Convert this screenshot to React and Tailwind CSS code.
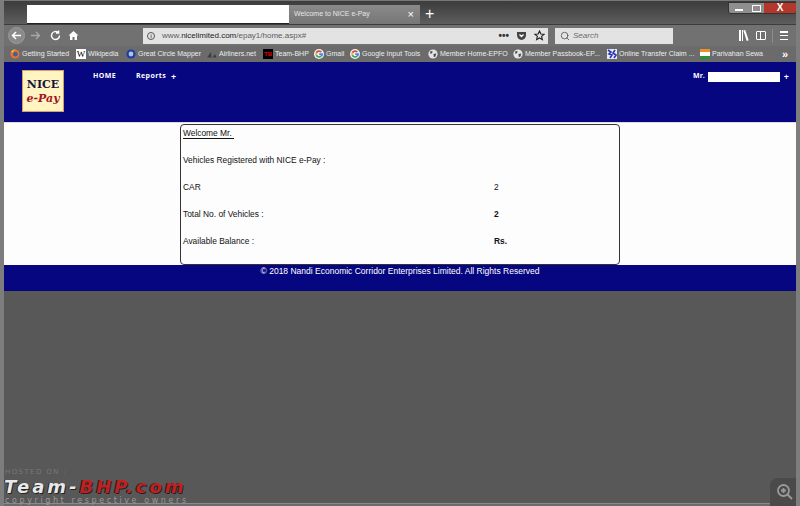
import { Search } from 'lucide-react';

const bookmarks = [
  { label: 'Getting Started', icon: 'firefox', width: 'w-[50px]' },
  { label: 'Wikipedia', icon: 'wiki', width: 'w-[34px]' },
  { label: 'Great Circle Mapper', icon: 'circle', width: 'w-[65px]' },
  { label: 'Airliners.net', icon: 'air', width: 'w-[40px]' },
  { label: 'Team-BHP', icon: 'tb', width: 'w-[35px]' },
  { label: 'Gmail', icon: 'google', width: 'w-[20px]' },
  { label: 'Google Input Tools', icon: 'google', width: 'w-[62px]' },
  { label: 'Member Home-EPFO', icon: 'globe', width: 'w-[69px]' },
  { label: 'Member Passbook-EP...', icon: 'globe', width: 'w-[78px]' },
  { label: 'Online Transfer Claim ...', icon: 'blue', width: 'w-[77px]' },
  { label: 'Parivahan Sewa', icon: 'flag', width: 'w-[60px]' }
];

function BookmarkIcon({ type }) {
  if (type === 'firefox') {
    return (
      <svg width="10" height="10" viewBox="0 0 10 10">
        <circle cx="5" cy="5" r="4.6" fill="#e8742a" />
        <circle cx="5.4" cy="5.2" r="2.4" fill="#3f5fa8" />
        <path d="M1 3 C2 1 4 0 6 .6 C4 1 3 2 3.4 3.4 Z" fill="#f5c23c" />
      </svg>
    );
  }
  if (type === 'wiki') {
    return <div className="flex h-[10px] w-[10px] items-center justify-center bg-white font-['Liberation_Serif',serif] text-[9px] leading-none text-black">W</div>;
  }
  if (type === 'circle') {
    return (
      <svg width="10" height="10" viewBox="0 0 10 10">
        <circle cx="5" cy="5" r="4.6" fill="#1f3f9c" />
        <circle cx="5" cy="5" r="2.4" fill="#a9c4ea" />
      </svg>
    );
  }
  if (type === 'air') {
    return (
      <svg width="10" height="10" viewBox="0 0 10 10">
        <path d="M0 8.5 L4 3 L4.6 8.5 Z M5.5 8.5 L8 5 L9.6 8.5 Z" fill="#3e3e3e" />
      </svg>
    );
  }
  if (type === 'tb') {
    return <div className="flex h-[10px] w-[10px] items-center justify-center bg-black font-['Liberation_Sans',sans-serif] text-[6px] font-bold leading-none text-red-600">TB</div>;
  }
  if (type === 'google') {
    return (
      <svg width="10" height="10" viewBox="0 0 10 10">
        <circle cx="5" cy="5" r="5" fill="#f3f3f3" />
        <path d="M8.2 2.7 A4 4 0 0 0 1.6 3.2 L3.2 4.2 A2.1 2.1 0 0 1 6.6 3.6 Z" fill="#dc4a3d" />
        <path d="M1.6 3.2 A4 4 0 0 0 1.6 6.8 L3.2 5.8 A2.1 2.1 0 0 1 3.2 4.2 Z" fill="#f0b429" />
        <path d="M1.6 6.8 A4 4 0 0 0 7.8 7.8 L6.4 6.6 A2.1 2.1 0 0 1 3.2 5.8 Z" fill="#35a853" />
        <path d="M9 4.2 H5.2 V5.9 H7.1 A2 2 0 0 1 6.4 6.6 L7.8 7.8 A4 4 0 0 0 9 4.2 Z" fill="#4285f4" />
      </svg>
    );
  }
  if (type === 'globe') {
    return (
      <svg width="10" height="10" viewBox="0 0 10 10">
        <circle cx="5" cy="5" r="4.6" fill="#e4e4e4" />
        <path d="M2 2.5 L4.5 2 L4.2 4 L2.6 5 Z M5.5 5 L8.2 4.6 L7.4 7.8 L5.8 8 Z" fill="#4a4a4a" />
      </svg>
    );
  }
  if (type === 'blue') {
    return (
      <svg width="10" height="10" viewBox="0 0 10 10">
        <rect width="10" height="10" fill="#e6e8f6" />
        <path d="M1 1 L4 3 L2 5 L5 6 L3 9 M8 1 L6 4 L9 6 L7 9" stroke="#2a35b4" strokeWidth="1.6" fill="none" />
      </svg>
    );
  }
  return (
    <div className="flex h-[10px] w-[10px] flex-col">
      <div className="h-1/3 bg-[#ef8f2a]" />
      <div className="h-1/3 bg-white" />
      <div className="h-1/3 bg-[#2d9136]" />
    </div>
  );
}

export default function App() {
  return (
    <div className="relative flex h-[506px] w-[800px] flex-col overflow-hidden border-x-[4px] border-x-[#7d7d7d] bg-[#585858] font-['Liberation_Sans',sans-serif]">
      {/* title bar and tabs */}
      <div className="flex h-[24px] shrink-0 items-end border-t border-[#777] bg-gradient-to-b from-[#3c3c3c] to-[#5e5e5e] pl-[23px]">
        <div className="h-[19px] w-[262px] border-b border-[#222] bg-white" />
        <div className="flex h-[19px] w-[131px] items-center justify-between bg-gradient-to-b from-[#8a8a8a] to-[#767676] pl-[5px] pr-[6px] text-[7px] text-[#e6e6e6]">
          <span>Welcome to NICE e-Pay</span>
          <span className="text-[11px] leading-none text-white">×</span>
        </div>
        <div className="ml-[5px] h-[19px] text-[16px] leading-[17px] text-white">+</div>
        <div className="mb-[10px] ml-auto mr-[-1px] flex h-[12px] w-[69px] overflow-hidden rounded-b-[3px] border border-[#333] text-white">
          <div className="flex w-[19px] items-end justify-center bg-[#8f8f8f] pb-[2px]"><div className="h-[2px] w-[8px] bg-white" /></div>
          <div className="flex w-[16px] items-center justify-center bg-[#8f8f8f]"><div className="h-[7px] w-[9px] border-[1.5px] border-white" /></div>
          <div className="flex flex-1 items-center justify-center bg-[#b3372a] text-[10px] font-bold leading-none">X</div>
        </div>
      </div>

      {/* nav toolbar */}
      <div className="flex h-[22px] shrink-0 items-center border-t border-[#3c3c3c] bg-[#717171] pl-[4px] text-white">
        <div className="flex h-[17px] w-[17px] items-center justify-center rounded-full border border-[#9a9a9a] bg-[#8a8a8a]">
          <svg width="11" height="11" viewBox="0 0 11 11" fill="none" stroke="white" strokeWidth="1.5"><path d="M10 5.5 H1.5 M5 2 L1.5 5.5 L5 9" /></svg>
        </div>
        <svg className="ml-[5px]" width="11" height="11" viewBox="0 0 11 11" fill="none" stroke="#a8a8a8" strokeWidth="1.3"><path d="M1 5.5 H9.5 M6 2 L9.5 5.5 L6 9" /></svg>
        <svg className="ml-[9px]" width="11" height="11" viewBox="0 0 11 11" fill="none" stroke="white" strokeWidth="1.4"><path d="M9.5 5.5 A4 4 0 1 1 8 2.4 M8.6 .4 V3 H6" /></svg>
        <svg className="ml-[7px]" width="11" height="11" viewBox="0 0 11 11" fill="white"><path d="M5.5 1 L10.5 5.5 H9 V10 H6.5 V7 H4.5 V10 H2 V5.5 H.5 Z" /></svg>
        <div className="ml-[64px] flex h-[16px] w-[405px] items-center bg-[#e3e3e3] pl-[4px] pr-[3px] text-[8px] text-[#5c5c5c]">
          <div className="flex h-[8px] w-[8px] items-center justify-center rounded-full border border-[#555] text-[6px] font-bold leading-none">i</div>
          <span className="ml-[7px]">www.<span className="text-[#1c1c1c]">nicelimited.com</span>/epay1/home.aspx#</span>
          <span className="ml-auto text-[10px] font-bold leading-none text-[#333]">•••</span>
          <svg className="ml-[7px]" width="11" height="10" viewBox="0 0 11 10"><path d="M1 1 H10 V4 A4.5 5 0 0 1 1 4 Z" fill="#444" /><path d="M3.5 3.5 L5.5 5.5 L7.5 3.5" stroke="white" strokeWidth="1.3" fill="none" /></svg>
          <svg className="ml-[7px]" width="11" height="11" viewBox="0 0 11 11" fill="none" stroke="#222" strokeWidth="1.1"><path d="M5.5 1 L6.9 4 L10 4.3 L7.6 6.4 L8.4 9.7 L5.5 8 L2.6 9.7 L3.4 6.4 L1 4.3 L4.1 4 Z" /></svg>
        </div>
        <div className="ml-[7px] flex h-[16px] w-[118px] items-center gap-[3px] bg-[#e3e3e3] pl-[5px] text-[8px] italic text-[#6b6b6b]">
          <Search size={10} strokeWidth={2} className="text-[#555]" />
          <span>Search</span>
        </div>
        <div className="ml-[66px] flex h-[11px] w-[10px] gap-[1px]">
          <div className="w-[1.5px] bg-white" />
          <div className="w-[1.5px] bg-white" />
          <div className="ml-[1px] w-[1.5px] rotate-[-18deg] bg-white" />
        </div>
        <div className="ml-[7px] flex h-[9px] w-[10px] rounded-[1px] border border-white"><div className="w-[4px] border-r border-white" /></div>
        <div className="ml-[6px] h-[14px] w-px bg-[#8c8c8c]" />
        <div className="ml-[7px] flex h-[9px] w-[8px] flex-col justify-between">
          <div className="h-[1.5px] bg-white" />
          <div className="h-[1.5px] bg-white" />
          <div className="h-[1.5px] bg-white" />
        </div>
      </div>

      {/* bookmarks */}
      <div className="flex h-[16px] shrink-0 items-center bg-[#6b6b6b] pl-[6px] text-[7px] text-[#ededed]">
        {bookmarks.map((item) => (
          <div key={item.label} className="mr-[4px] flex items-center gap-[2px]">
            <BookmarkIcon type={item.icon} />
            <span className={`${item.width} whitespace-nowrap`}>{item.label}</span>
          </div>
        ))}
        <span className="ml-auto mr-[8px] text-[11px] font-bold leading-none text-white">»</span>
      </div>

      {/* site header */}
      <div className="flex h-[60px] shrink-0 items-start bg-[#060680] pl-[18px] pt-[8px] font-['Open_Sans',sans-serif] text-white">
        <div className="flex h-[42px] w-[42px] flex-col items-center justify-center border border-[#d9a066] bg-[#fff4c2] font-['DejaVu_Serif',serif] font-bold leading-none">
          <span className="text-[11px] text-[#14143c]">NICE</span>
          <span className="mt-[3px] text-[11px] italic text-[#a0141e]">e-Pay</span>
        </div>
        <span className="ml-[29px] mt-[1px] text-[7px] font-bold tracking-[.4px]">HOME</span>
        <span className="ml-[20px] mt-[1px] text-[7px] font-bold tracking-[.4px]">Reports</span>
        <span className="ml-[5px] text-[9px] font-bold">+</span>
        <span className="ml-auto mt-[1px] text-[7px] font-bold">Mr.</span>
        <div className="ml-[3px] mt-[2px] h-[10px] w-[72px] bg-white" />
        <span className="ml-[4px] mr-[7px] text-[9px] font-bold">+</span>
      </div>

      {/* welcome panel */}
      <div className="flex h-[143px] shrink-0 justify-center border-t border-[#dcdcdc] bg-[#fdfdfd] text-[8.4px] text-[#111]">
        <div className="mt-px flex h-[141px] w-[440px] flex-col rounded-[4px] border border-[#333] pl-[2px] pt-[1px]">
          <div className="flex h-[14px] items-center">
            <span className="w-[51px] border-b border-[#111] leading-[10px]">Welcome Mr.</span>
          </div>
          <div className="mt-[13px] flex h-[14px] items-center">Vehicles Registered with NICE e-Pay :</div>
          <div className="mt-[13px] flex h-[14px] items-center">
            <span className="w-[311px]">CAR</span>
            <span>2</span>
          </div>
          <div className="mt-[13px] flex h-[14px] items-center">
            <span className="w-[311px]">Total No. of Vehicles :</span>
            <span className="font-bold">2</span>
          </div>
          <div className="mt-[13px] flex h-[14px] items-center">
            <span className="w-[311px]">Available Balance :</span>
            <span className="font-bold">Rs.</span>
          </div>
        </div>
      </div>

      {/* footer */}
      <div className="h-[26px] shrink-0 bg-[#060680] text-center text-[8.5px] leading-[12px] text-white">
        © 2018 Nandi Economic Corridor Enterprises Limited. All Rights Reserved
      </div>

      <div className="flex-1 bg-[#585858]" />
      <div className="h-[3px] shrink-0 border-t border-[#8a8a8a] bg-[#6a6a6a]" />

      {/* hosting watermark */}
      <div className="absolute bottom-[1px] left-0 flex flex-col font-['DejaVu_Sans',sans-serif] leading-none">
        <span className="ml-[1px] text-[7px] tracking-[1.4px] text-[#777]">HOSTED ON :</span>
        <span className="mt-[3px] whitespace-nowrap text-[18px] font-bold italic leading-[16px] tracking-[3px] text-[#e8e8e8] [text-shadow:1px_1px_0_#222,-1px_0_0_#222]">Team-<span className="text-[#c02020]">BHP.com</span></span>
        <span className="ml-[1px] mt-[2px] whitespace-nowrap text-[8px] tracking-[2.6px] text-[#9a9a9a]">copyright respective owners</span>
      </div>

      {/* zoom badge */}
      <div className="absolute bottom-0 right-[-4px] flex h-[28px] w-[30px] items-center justify-center rounded-tl-[8px] bg-[#4a4a4a]">
        <svg width="18" height="18" viewBox="0 0 18 18" fill="none" stroke="#9a9a9a" strokeWidth="1.8">
          <circle cx="7.5" cy="7.5" r="5.5" />
          <path d="M11.5 11.5 L16 16 M7.5 5 V10 M5 7.5 H10" />
        </svg>
      </div>
    </div>
  );
}
